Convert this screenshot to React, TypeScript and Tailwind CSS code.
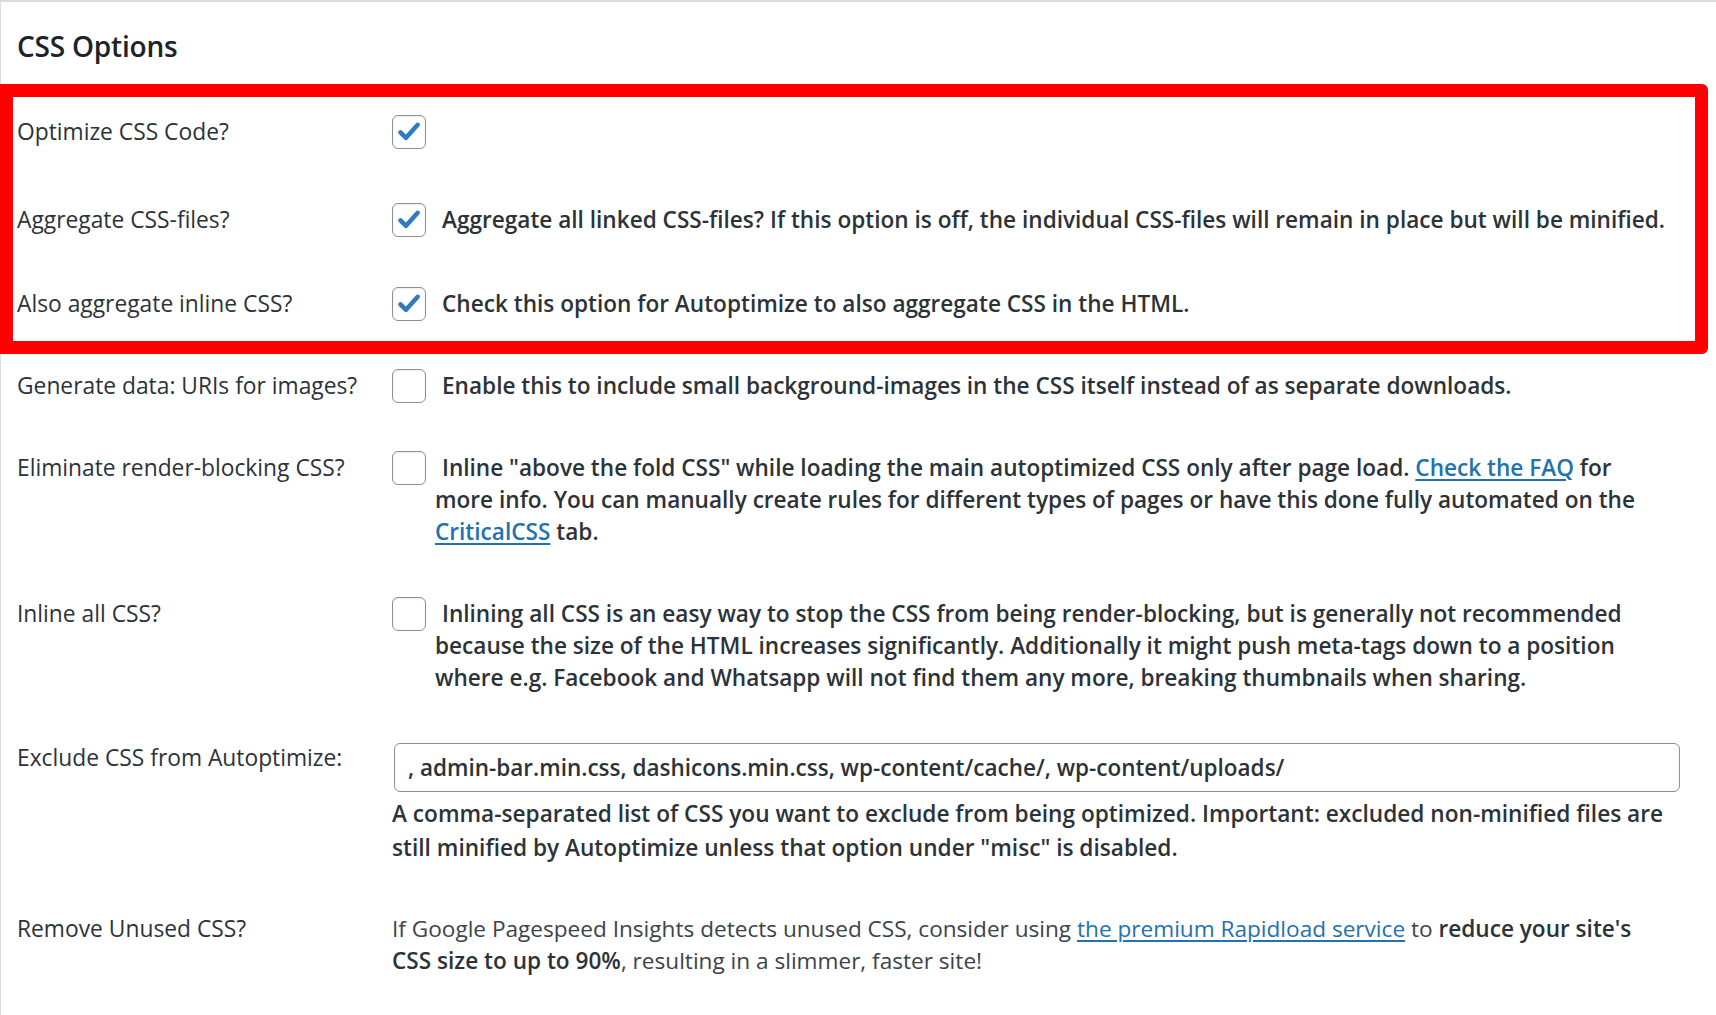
import React from "react";

function Box({ checked }: { checked?: boolean }) {
  return (
    <span className="mt-[-1px] flex h-[34px] w-[34px] shrink-0 items-center justify-center rounded-[6px] border-[1.5px] border-[#8c8f94] bg-white shadow-[inset_0_1px_2px_rgba(0,0,0,0.08)]">
      {checked && (
        <svg viewBox="0 0 20 20" className="h-[30px] w-[30px]">
          <path
            d="M4.3 10.2 L8 13.9 L15.8 5.2"
            fill="none"
            stroke="#2f7bbf"
            strokeWidth="3"
            strokeLinecap="round"
            strokeLinejoin="round"
          />
        </svg>
      )}
    </span>
  );
}

function A({ children }: { children: React.ReactNode }) {
  return (
    <a href="#" className="text-[#2271b1] underline decoration-[1.5px] underline-offset-[3px]">
      {children}
    </a>
  );
}

function Label({ inside, children }: { inside?: boolean; children: React.ReactNode }) {
  return (
    <div
      className={
        (inside ? "w-[379px] pl-[4px] " : "w-[391px] pl-[16px] ") +
        "shrink-0 text-[22.8px] leading-[32px] text-[#2c3338]"
      }
    >
      {children}
    </div>
  );
}

function CheckRow({
  inside,
  label,
  checked,
  pt,
  children,
}: {
  inside?: boolean;
  label: string;
  checked?: boolean;
  pt: string;
  children?: React.ReactNode;
}) {
  return (
    <div className={"flex " + pt}>
      <Label inside={inside}>{label}</Label>
      <div className="flex items-start">
        <Box checked={checked} />
        {children && (
          <div className="ml-[9px] whitespace-nowrap indent-[7px] text-[22.6px] font-[560] leading-[32px] text-[#2c3338]">
            {children}
          </div>
        )}
      </div>
    </div>
  );
}

export default function App() {
  return (
    <div className="min-h-[1015px] w-full overflow-hidden bg-white font-['Open_Sans','Noto_Sans',sans-serif] text-[#2c3338]">
      <div className="min-h-[1015px] border-l border-t-2 border-[#dcdcde]">
        <h2 className="pl-[16px] pt-[27px] text-[28px] font-semibold leading-[34px] tracking-[-0.2px] text-[#1d2327]">
          CSS Options
        </h2>

        <div className="ml-[-1px] mr-[8px] mt-[21px] rounded-r-[6px] border-[13px] border-[#ff0000] pb-[20px]">
          <CheckRow inside label="Optimize CSS Code?" checked pt="pt-[19px]" />
          <CheckRow inside label="Aggregate CSS-files?" checked pt="pt-[55px]">
            Aggregate all linked CSS-files? If this option is off, the individual CSS-files will remain in place but will be minified.
          </CheckRow>
          <CheckRow inside label="Also aggregate inline CSS?" checked pt="pt-[51px]">
            Check this option for Autoptimize to also aggregate CSS in the HTML.
          </CheckRow>
        </div>

        <CheckRow label="Generate data: URIs for images?" pt="pt-[16px]">
          Enable this to include small background-images in the CSS itself instead of as separate downloads.
        </CheckRow>

        <CheckRow label="Eliminate render-blocking CSS?" pt="pt-[49px]">
          Inline "above the fold CSS" while loading the main autoptimized CSS only after page load. <A>Check the FAQ</A> for
          <br />
          <span className="inline-block indent-0">
            more info. You can manually create rules for different types of pages or have this done fully automated on the
          </span>
          <br />
          <span className="inline-block indent-0">
            <A>CriticalCSS</A> tab.
          </span>
        </CheckRow>

        <CheckRow label="Inline all CSS?" pt="pt-[50px]">
          Inlining all CSS is an easy way to stop the CSS from being render-blocking, but is generally not recommended
          <br />
          <span className="inline-block indent-0">
            because the size of the HTML increases significantly. Additionally it might push meta-tags down to a position
          </span>
          <br />
          <span className="inline-block indent-0">
            where e.g. Facebook and Whatsapp will not find them any more, breaking thumbnails when sharing.
          </span>
        </CheckRow>

        <div className="flex pt-[48px]">
          <Label>Exclude CSS from Autoptimize:</Label>
          <div className="mt-[1px] flex flex-col">
            <div className="ml-[2px] flex h-[49px] w-[1286px] items-center rounded-[6px] border-[1.5px] border-[#8c8f94] bg-white pl-[13px] text-[22.5px] font-[560] text-[#2c3338]">
              , admin-bar.min.css, dashicons.min.css, wp-content/cache/, wp-content/uploads/
            </div>
            <p className="mt-[5px] whitespace-nowrap text-[22.65px] font-[560] leading-[34px] text-[#2c3338]">
              A comma-separated list of CSS you want to exclude from being optimized. Important: excluded non-minified files are
              <br />
              still minified by Autoptimize unless that option under "misc" is disabled.
            </p>
          </div>
        </div>

        <div className="flex pt-[48px]">
          <Label>Remove Unused CSS?</Label>
          <p className="whitespace-nowrap text-[22.6px] leading-[32px] text-[#3c434a]">
            If Google Pagespeed Insights detects unused CSS, consider using <A>the premium Rapidload service</A> to{" "}
            <strong className="font-semibold text-[#2c3338]">reduce your site's</strong>
            <br />
            <strong className="font-semibold text-[#2c3338]">CSS size to up to 90%</strong>, resulting in a slimmer, faster site!
          </p>
        </div>
      </div>
    </div>
  );
}
